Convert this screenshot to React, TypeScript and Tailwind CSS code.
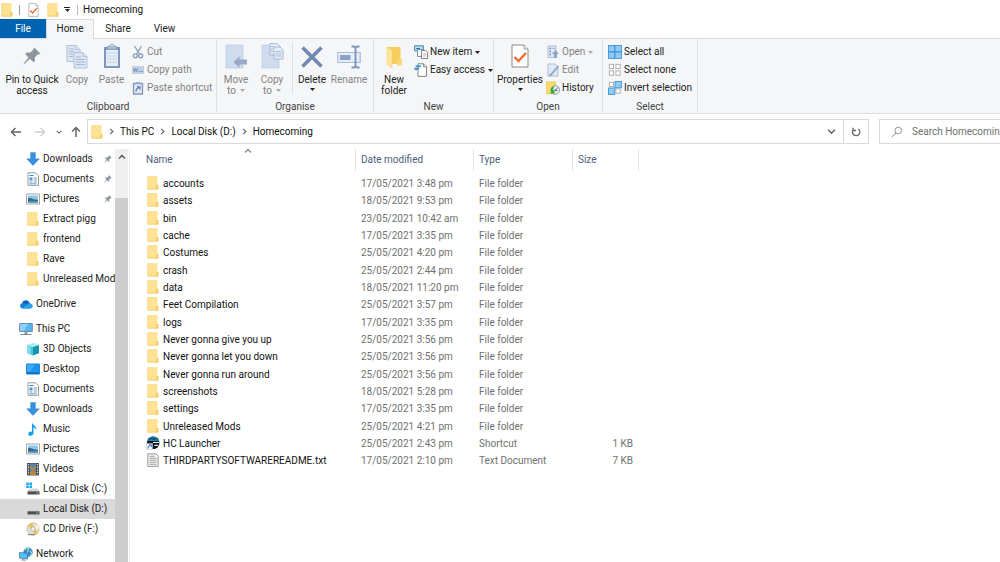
import type { ReactNode } from "react";

/* ---------- icons ---------- */

function Folder({ className = "w-[12px] h-[14px]" }: { className?: string }) {
  return (
    <svg viewBox="0 0 12 14" className={`shrink-0 ${className}`} aria-hidden="true">
      <path d="M.5.5H10.500v12.800H.5z" fill="#ffe394" />
      <path d="M.5.5H10.500v.8H.5zM.5.5h.7v12.800H.5z" fill="#f6d478" />
      <path d="M.5 12.700H10.500v.8H.5z" fill="#efc75c" />
      <path d="M9.300 9.300h1.900v3.900H9.300z" fill="#fbdb7c" stroke="#ecc355" strokeWidth=".6" />
    </svg>
  );
}

function PinIcon({ className, color }: { className: string; color: string }) {
  return (
    <svg viewBox="0 0 18 18" className={`shrink-0 ${className}`} aria-hidden="true">
      <path d="M11.5.8l5.8 5.8-1.5.9-.9-.2-3.2 3.3.3 3.2-1.5 1.5-3.6-3.5L1 17.3l-.5-.5 5-6.4-3.3-3.5 1.5-1.5 3.6.2 3.2-3-.2-.8z" fill={color} />
    </svg>
  );
}

const CopyIcon = () => (
  <svg viewBox="0 0 22 26" className="w-[22px] h-[26px]" aria-hidden="true">
    <g fill="#dbe5f3" stroke="#aabdd9" strokeWidth=".9">
      <path d="M1 2.500h9l4 4v12H1z" />
      <path d="M10 2.500v4h4" />
      <path d="M8 9.500h9l4 4v11.500H8z" />
      <path d="M17 9.500v4h4" />
    </g>
    <path d="M3 6h5M3 8.500h5M3 11h4M3 13.500h4M10 14h5M10 16.500h9M10 19h9M10 21.500h9" stroke="#9db3d3" strokeWidth=".9" />
  </svg>
);

const PasteIcon = () => (
  <svg viewBox="0 0 20 26" className="w-[20px] h-[26px]" aria-hidden="true">
    <path d="M2 4h16v21H2z" fill="#7f95bb" />
    <path d="M4 7h12v16H4z" fill="#e6edf8" />
    <path d="M5 10h10M5 13h10M5 16h10M5 19h10" stroke="#c3d1e7" strokeWidth=".9" />
    <path d="M5.500 3h2.500a2 2 0 014 0h2.500v3.500h-9z" fill="#a9bbd7" stroke="#7f95bb" strokeWidth=".6" />
    <circle cx="10" cy="2.800" r=".8" fill="#f5f6f7" />
  </svg>
);

const CutIcon = () => (
  <svg viewBox="0 0 12 14" className="w-[12px] h-[14px]" aria-hidden="true">
    <path d="M2.500 1l5 8M9.500 1l-5 8" stroke="#8fa3bf" strokeWidth="1.400" />
    <circle cx="3.300" cy="10.800" r="2" fill="none" stroke="#8095b8" strokeWidth="1.200" />
    <circle cx="8.700" cy="10.800" r="2" fill="none" stroke="#8095b8" strokeWidth="1.200" />
  </svg>
);

const CopyPathIcon = () => (
  <svg viewBox="0 0 12 12" className="w-[12px] h-[12px]" aria-hidden="true">
    <path d="M0 2h12v8H0z" fill="#c2d0e6" />
    <path d="M1.500 4.500l1 3 1-3 1 3 1-3" fill="none" stroke="#6d83aa" strokeWidth=".9" />
    <path d="M6.500 7.500h1M8.300 7.500h1M10 7.500h1" stroke="#6d83aa" />
  </svg>
);

const PasteShortcutIcon = () => (
  <svg viewBox="0 0 12 14" className="w-[12px] h-[14px]" aria-hidden="true">
    <path d="M1.500 2.500h9v10.500h-9z" fill="#dfe8f5" stroke="#8499bd" strokeWidth="1.300" />
    <path d="M4 1h4v2H4z" fill="#9db0cf" />
    <path d="M4 10.500c0-2.500 1-3.500 3-3.500M5 5.800h3v3" fill="none" stroke="#5f79a8" strokeWidth="1.200" />
  </svg>
);

const MoveIcon = () => (
  <svg viewBox="0 0 24 26" className="w-[24px] h-[26px]" aria-hidden="true">
    <path d="M2 2h17v23H2z" fill="#cfdcef" stroke="#b9cae4" strokeWidth=".7" />
    <path d="M9.500 19l6-5.800v3.400H23v4.800h-7.500v3.400z" fill="#98aac6" />
  </svg>
);

const CopyToIcon = () => (
  <svg viewBox="0 0 24 26" className="w-[24px] h-[26px]" aria-hidden="true">
    <path d="M2 2h17v23H2z" fill="#cfdcef" stroke="#b9cae4" strokeWidth=".7" />
    <path d="M10 .6h7l3 3V12H10z" fill="#e9eff8" stroke="#92a8ca" strokeWidth=".8" />
    <path d="M14 4h6l3 3v9h-9z" fill="#e9eff8" stroke="#92a8ca" strokeWidth=".8" />
    <path d="M11 3.500h3M11 6h2M11 8.500h2M15.500 8.500h6M15.500 10.800h6M15.500 13h6" stroke="#92a8ca" strokeWidth=".8" />
  </svg>
);

const DeleteIcon = () => (
  <svg viewBox="0 0 24 26" className="w-[24px] h-[26px]" aria-hidden="true">
    <path d="M2.500 4.500l19 19M21.500 4.500l-19 19" stroke="#7388b0" strokeWidth="3.600" />
  </svg>
);

const RenameIcon = () => (
  <svg viewBox="0 0 24 26" className="w-[24px] h-[26px]" aria-hidden="true">
    <path d="M.8 9.500h22.400v10H.8z" fill="#e6edf7" stroke="#a9bcd9" strokeWidth="1.200" />
    <path d="M3 12h10.500v5H3z" fill="#8ca1c6" />
    <path d="M14.500 3.500h2.500l1.500 1 1.500-1h2.500M14.500 24.500h2.500l1.500-1 1.500 1h2.500M18.500 4.500v19" fill="none" stroke="#7c93bb" strokeWidth="1.900" />
  </svg>
);

const NewFolderIcon = () => (
  <svg viewBox="0 0 18 26" className="w-[18px] h-[26px]" aria-hidden="true">
    <path d="M2 4h13.500v17H2z" fill="#f7cd5f" />
    <path d="M2 4l5 3.500V25l-5-3.500z" fill="#ffe59a" stroke="#f3cf6b" strokeWidth=".5" />
    <path d="M12 17l1-1h4v6.500H12z" fill="#fbd876" />
  </svg>
);

const NewItemIcon = () => (
  <svg viewBox="0 0 14 14" className="w-[14px] h-[14px]" aria-hidden="true">
    <path d="M.6.8h8.800v5H.6z" fill="#b9ddf2" stroke="#4c86ad" />
    <path d="M2 3.500h4" stroke="#3577a3" />
    <path d="M3.500 4.500h5v7h-5z" fill="#f2f7fb" stroke="#6c8ba5" strokeWidth=".9" />
    <path d="M7.500 5.500h4l2 2v6h-6z" fill="#fff" stroke="#777" strokeWidth=".9" />
    <path d="M9 9h3M9 11h3" stroke="#b892a2" strokeWidth=".8" />
  </svg>
);

const EasyAccessIcon = () => (
  <svg viewBox="0 0 14 14" className="w-[14px] h-[14px]" aria-hidden="true">
    <path d="M4 .8h5.500l3 3v9.600H4z" fill="#fff" stroke="#777" strokeWidth=".9" />
    <path d="M9.500.8v3h3" fill="none" stroke="#777" strokeWidth=".8" />
    <path d="M2 2.500h5.500l-1 1.800H1.200zM.5 5h5l-1.200 1.800H2.800L1.500 8 2 6.800H0z" fill="#3b8fce" />
  </svg>
);

const CheckDoc = ({ className }: { className: string }) => (
  <svg viewBox="0 0 18 24" className={`shrink-0 ${className}`} aria-hidden="true">
    <path d="M1 1h12l4 4v18H1z" fill="#fff" stroke="#8b8b8b" strokeWidth="1" />
    <path d="M13 1v4h4" fill="#eee" stroke="#8b8b8b" strokeWidth=".8" />
    <path d="M3.500 13l4 4L15 9" fill="none" stroke="#ee6b2d" strokeWidth="2.300" />
  </svg>
);

const OpenIcon = () => (
  <svg viewBox="0 0 12 14" className="w-[12px] h-[14px]" aria-hidden="true">
    <path d="M1 1h8v11.500H1z" fill="#dce6f4" stroke="#a5b8d5" strokeWidth=".9" />
    <path d="M2.500 3.500h1.500M2.500 6.500h1.500M2.500 9.500h1.500" stroke="#7188b0" strokeWidth="1.400" />
    <path d="M5.500 3.500h2.500" stroke="#a5b8d5" />
    <path d="M8.500 5l3.500 4h-2v4H7V9H5z" fill="#90a5c6" />
  </svg>
);

const EditIcon = () => (
  <svg viewBox="0 0 12 14" className="w-[12px] h-[14px]" aria-hidden="true">
    <path d="M1 1h7l3 3v9H1z" fill="#e1eaf6" stroke="#a5b8d5" strokeWidth=".9" />
    <path d="M11.500 3L5 10.500l-2.500 2.500" stroke="#8fa5c8" strokeWidth="1.900" fill="none" />
  </svg>
);

const HistoryIcon = () => (
  <svg viewBox="0 0 14 14" className="w-[14px] h-[14px]" aria-hidden="true">
    <path d="M.5.800h9v12H.5z" fill="#fbdc6b" stroke="#e7bc42" strokeWidth=".6" />
    <circle cx="9.300" cy="9" r="4.300" fill="#e9eeee" stroke="#7d8b8b" strokeWidth=".8" />
    <path d="M9 9.500l3-3M9 9.500h2.500" stroke="#456" strokeWidth=".9" fill="none" />
    <path d="M7.500 5.500c-3 .8-3.200 3.500-2.200 5.500L3.500 12.500h5V8L7 9.500c-.5-1 0-2 1.200-2.500z" fill="#37a53c" />
  </svg>
);

function SelectGrid({ filled }: { filled: boolean[] }) {
  const spots = [[0.7, 0.7], [7.3, 0.7], [0.7, 7.3], [7.3, 7.3]];
  return (
    <svg viewBox="0 0 14 14" className="w-[14px] h-[14px]" aria-hidden="true">
      {spots.map(([x, y], i) =>
        filled[i] ? (
          <rect key={i} x={x - 0.3} y={y - 0.3} width="6.400" height="6.400" fill="#8fcbf6" stroke="#3e92d2" strokeWidth=".9" />
        ) : (
          <rect key={i} x={x + 0.6} y={y + 0.6} width="4.300" height="4.300" fill="#fff" stroke="#a0a0a0" strokeWidth=".8" />
        )
      )}
    </svg>
  );
}

const DownloadsIcon = () => (
  <svg viewBox="0 0 14 14" className="w-[14px] h-[14px]" aria-hidden="true">
    <path d="M4.600.5h4.800v6.300h4L7 13.500.6 6.800h4z" fill="#3591e0" stroke="#2b7cc9" strokeWidth=".4" />
  </svg>
);

const DocumentsIcon = () => (
  <svg viewBox="0 0 14 14" className="w-[14px] h-[14px]" aria-hidden="true">
    <path d="M2 .8h7.500l3 3v9.500H2z" fill="#fff" stroke="#8a8f94" strokeWidth=".9" />
    <path d="M3.500 3.500h4" stroke="#3d85bd" />
    <path d="M3.500 5.500h3v3h-3z" fill="#4b95ce" />
    <path d="M7.800 6h3M7.800 8h3M3.500 10h3M7.800 10h3M3.500 11.800h7" stroke="#5095c5" strokeWidth=".9" />
  </svg>
);

const PicturesIcon = () => (
  <svg viewBox="0 0 14 14" className="w-[14px] h-[14px]" aria-hidden="true">
    <path d="M.5 2h13v10H.5z" fill="#fff" stroke="#9a9a9a" strokeWidth=".9" />
    <path d="M2 3.500h10v7H2z" fill="#8cc5ea" />
    <path d="M2 6.500c3-1.500 5 1.500 10 1.500v2.500H2z" fill="#396b83" />
    <path d="M2 9.500c4-1 7 0 10-.5v1.500H2z" fill="#4f94c5" />
  </svg>
);

const OneDriveIcon = () => (
  <svg viewBox="0 0 14 14" className="w-[14px] h-[14px]" aria-hidden="true">
    <path d="M3 6.300a4 4 0 017.300-1.100L13 9.500 3 11z" fill="#0b62b8" />
    <path d="M3.300 11.500A2.800 2.800 0 013.300 6c1.500-.3 3 .3 4 1.500l3.700 4z" fill="#1681d8" />
    <path d="M3 11.500l5.500-4.200C9.800 5 13.800 6.500 13.800 9.300c0 1.300-1 2.200-2.300 2.200z" fill="#2aa3ec" />
  </svg>
);

const PcIcon = () => (
  <svg viewBox="0 0 14 14" className="w-[14px] h-[14px]" aria-hidden="true">
    <path d="M.7 1.500h12.600v8H.7z" fill="#53b6f3" stroke="#6a8196" strokeWidth=".9" />
    <path d="M1.200 2h8L5 9H1.200z" fill="#8bd0fa" />
    <path d="M5.500 9.800h3V12h-3z" fill="#8c9aa6" />
    <path d="M1.500 12h11v1h-11z" fill="#7d8a96" />
  </svg>
);

const CubeIcon = () => (
  <svg viewBox="0 0 14 14" className="w-[14px] h-[14px]" aria-hidden="true">
    <path d="M1 3L7.500.7 13 3 7 5z" fill="#a6edf4" />
    <path d="M1 3l6 2v8.500l-6-2.300z" fill="#4bc8d8" />
    <path d="M13 3L7 5v8.500l6-2.300z" fill="#1694ad" />
    <path d="M1 3l3.500 1.200v8.300L1 11.200z" fill="#7fdee8" />
  </svg>
);

const DesktopIcon = () => (
  <svg viewBox="0 0 14 14" className="w-[14px] h-[14px]" aria-hidden="true">
    <path d="M.6 2h12.800v10H.6z" fill="#1b95ee" stroke="#0c76c6" strokeWidth=".9" />
    <path d="M1 2.500h8L4 10H1z" fill="#3aabf8" />
    <path d="M1 10.500h12v1H1z" fill="#075ea3" />
  </svg>
);

const MusicIcon = () => (
  <svg viewBox="0 0 14 14" className="w-[14px] h-[14px]" aria-hidden="true">
    <path d="M6 .3c.4 3 5.300 3.800 4.200 8-.5-2-1.700-2.800-2.700-3.100v5.800c0 1.800-1.600 2.700-3 2.700-1.300 0-2.200-.7-2.200-1.800 0-1.700 1.900-2.600 3.700-2.200z" fill="#169be8" />
  </svg>
);

const VideosIcon = () => (
  <svg viewBox="0 0 14 14" className="w-[14px] h-[14px]" aria-hidden="true">
    <path d="M1 1h12v12.500H1z" fill="#4b4f55" />
    <path d="M4 1.500h6v11.500H4z" fill="#4c87bb" />
    <path d="M4 3l3 3 3-3v3L7 9 4 6zM4 10l3-1.500 3 2V13H4z" fill="#b98539" />
    <path d="M2.500 2v11M11.500 2v11" stroke="#e1e1e1" strokeWidth="1.200" strokeDasharray="1.300 1.300" />
  </svg>
);

const DiskIcon = ({ system = false }: { system?: boolean }) => (
  <svg viewBox="0 0 14 14" className="w-[14px] h-[14px]" aria-hidden="true">
    <path d="M3.500 6.500h8l2 2.800h-12z" fill="#d3d5d7" />
    <path d="M1.500 9.300h12V12.500h-12z" fill="#4c5155" />
    <path d="M10.500 11h1.800" stroke="#67e36a" />
    {system && <path d="M.3.6h2.500v2.300H.3zM3.500.6H6v2.300H3.500zM.3 3.600h2.500v2.300H.3zM3.500 3.600H6v2.300H3.500z" fill="#16a6ee" />}
  </svg>
);

const CdIcon = () => (
  <svg viewBox="0 0 14 14" className="w-[14px] h-[14px]" aria-hidden="true">
    <circle cx="7" cy="7" r="6.200" fill="#e2e0d7" stroke="#b0aca1" strokeWidth=".6" />
    <path d="M7 7L1.500 4A6.200 6.200 0 017 .9zM7 7l5.500 3a6.200 6.200 0 01-4.500 3z" fill="#e8c255" />
    <path d="M7 7l4.500-4.300a6 6 0 011.500 4z" fill="#fbf5d6" />
    <circle cx="7" cy="7" r="2.200" fill="#f9f9f7" stroke="#aaa28a" strokeWidth=".8" />
    <path d="M2 12h7v1.200H2z" fill="#8c8c88" />
  </svg>
);

const NetworkIcon = () => (
  <svg viewBox="0 0 14 14" className="w-[14px] h-[14px]" aria-hidden="true">
    <circle cx="9" cy="5.300" r="4.700" fill="#3a88bd" />
    <path d="M5.500 3c2-2 3-1 4-1.500 1 2-1 2-1 4M11 4l2 2-2 3" stroke="#9ed3ea" strokeWidth="1.200" fill="none" />
    <path d="M.5 5.500l8 1v5.500l-8-1z" fill="#5bbdf5" stroke="#2e7db4" strokeWidth=".8" />
    <path d="M3 12l4 1v.6H2.500z" fill="#78858d" />
  </svg>
);

const LauncherIcon = () => (
  <svg viewBox="0 0 14 14" className="w-[14px] h-[14px]" aria-hidden="true">
    <circle cx="7.200" cy="6.800" r="6.300" fill="#10171d" />
    <path d="M1.200 5a6.300 6.300 0 0112 0z" fill="#1f84b5" />
    <path d="M4 4V2.500M6 4V1.500M8 4V2M10 4V2.500" stroke="#0e2f44" strokeWidth="1" />
    <path d="M7 6.500h6.300M8.500 9.300h3.500" stroke="#dfe7ec" strokeWidth="1.200" />
    <path d="M.5 7.500h6v6h-6z" fill="#f4f7fb" stroke="#aebac8" strokeWidth=".5" />
    <path d="M2 12.500c0-2 .8-2.800 2.500-2.800M3 8.800h2.300v2.300" fill="none" stroke="#2769b5" strokeWidth="1" />
  </svg>
);

const TextFileIcon = () => (
  <svg viewBox="0 0 14 14" className="w-[14px] h-[14px]" aria-hidden="true">
    <path d="M1.800.8h8l2.400 2.400v10.200H1.800z" fill="#f4f4f4" stroke="#8e8e8e" strokeWidth=".9" />
    <path d="M3.500 3.300h5M3.500 5.300h7M3.500 7.300h7M3.500 9.300h7M3.500 11.300h7" stroke="#9a9a9a" strokeWidth=".9" />
  </svg>
);

const Caret = ({ className }: { className: string }) => (
  <svg viewBox="0 0 5 3" className={`w-[5px] h-[3px] shrink-0 ${className}`} aria-hidden="true">
    <path d="M0 0h5L2.500 3z" fill="currentColor" />
  </svg>
);

function Chevron({ d, className }: { d: string; className: string }) {
  return (
    <svg viewBox="0 0 8 8" className={`shrink-0 ${className}`} aria-hidden="true">
      <path d={d} fill="none" stroke="currentColor" strokeWidth="1.400" />
    </svg>
  );
}
const DOWN = "M1 2.500l3 3 3-3";
const UP = "M1 5.500l3-3 3 3";
const RIGHT = "M2.500 1l3 3-3 3";

function Arrow({ className }: { className: string }) {
  return (
    <svg viewBox="0 0 12 12" className={`w-[12px] h-[12px] ${className}`} aria-hidden="true">
      <path d="M11 6H1.500M5.500 2L1.500 6l4 4" fill="none" stroke="currentColor" strokeWidth="1.500" />
    </svg>
  );
}

/* ---------- ribbon ---------- */

function Group({ label, className, children }: { label: string; className: string; children: ReactNode }) {
  return (
    <section className={`flex shrink-0 flex-col border-r border-[#e2e3e4] ${className}`} aria-label={label}>
      <div className="flex h-[61px] items-start pt-[3px]">{children}</div>
      <div className="text-center leading-[13px] text-[#444]">{label}</div>
    </section>
  );
}

function BigButton(props: { icon: ReactNode; lines: string[]; className: string; caret?: boolean; disabled?: boolean }) {
  const { icon, lines, className, caret, disabled } = props;
  const last = lines.length - 1;
  return (
    <button
      type="button"
      disabled={disabled}
      className={`flex shrink-0 flex-col items-center whitespace-nowrap leading-[11px] ${disabled ? "text-[#838383]" : "text-[#222]"} ${className}`}
    >
      <span className="mb-1 flex h-[28px] items-center justify-center">{icon}</span>
      {lines.map((l, i) => (
        <span key={l} className="flex items-center gap-1">
          {l}
          {caret && last > 0 && i === last && <Caret className="text-[#aaa]" />}
        </span>
      ))}
      {caret && last === 0 && <Caret className="mt-[3px]" />}
    </button>
  );
}

function SmallButton(props: { icon: ReactNode; label: string; caret?: boolean; disabled?: boolean }) {
  const { icon, label, caret, disabled } = props;
  return (
    <button
      type="button"
      disabled={disabled}
      className={`flex h-[18px] items-center whitespace-nowrap ${disabled ? "text-[#838383]" : "text-[#222]"}`}
    >
      <span className="mr-0.5 flex w-[14px] shrink-0 justify-center">{icon}</span>
      {label}
      {caret && <Caret className={disabled ? "ml-[3px] text-[#aaa]" : "ml-[3px]"} />}
    </button>
  );
}

function Ribbon() {
  return (
    <div className="flex h-[76px] shrink-0 border-y border-[#dadbdc] bg-[#f5f6f7]">
      <Group label="Clipboard" className="w-[217px]">
        <BigButton className="ml-0.5 w-[60px]" lines={["Pin to Quick", "access"]} icon={<PinIcon className="w-[18px] h-[18px]" color="#8c959e" />} />
        <BigButton className="w-[30px]" lines={["Copy"]} disabled icon={<CopyIcon />} />
        <BigButton className="w-[39px]" lines={["Paste"]} disabled icon={<PasteIcon />} />
        <div className="pt-px">
          <SmallButton icon={<CutIcon />} label="Cut" disabled />
          <SmallButton icon={<CopyPathIcon />} label="Copy path" disabled />
          <SmallButton icon={<PasteShortcutIcon />} label="Paste shortcut" disabled />
        </div>
      </Group>
      <Group label="Organise" className="w-[157px]">
        <BigButton className="w-[38px]" lines={["Move", "to"]} caret disabled icon={<MoveIcon />} />
        <BigButton className="w-[34px]" lines={["Copy", "to"]} caret disabled icon={<CopyToIcon />} />
        <div className="ml-[3px] h-[52px] w-px bg-[#e0e1e2]" />
        <BigButton className="w-[38px]" lines={["Delete"]} caret icon={<DeleteIcon />} />
        <BigButton className="w-[36px]" lines={["Rename"]} disabled icon={<RenameIcon />} />
      </Group>
      <Group label="New" className="w-[120px]">
        <BigButton className="w-[40px]" lines={["New", "folder"]} icon={<NewFolderIcon />} />
        <div className="pt-px">
          <SmallButton icon={<NewItemIcon />} label="New item" caret />
          <SmallButton icon={<EasyAccessIcon />} label="Easy access" caret />
        </div>
      </Group>
      <Group label="Open" className="w-[109px]">
        <BigButton className="w-[52px]" lines={["Properties"]} caret icon={<CheckDoc className="w-[18px] h-[24px]" />} />
        <div className="pt-px">
          <SmallButton icon={<OpenIcon />} label="Open" caret disabled />
          <SmallButton icon={<EditIcon />} label="Edit" disabled />
          <SmallButton icon={<HistoryIcon />} label="History" />
        </div>
      </Group>
      <Group label="Select" className="w-[95px]">
        <div className="ml-[5px] pt-px">
          <SmallButton icon={<SelectGrid filled={[true, true, true, true]} />} label="Select all" />
          <SmallButton icon={<SelectGrid filled={[false, false, false, false]} />} label="Select none" />
          <SmallButton icon={<SelectGrid filled={[false, true, true, false]} />} label="Invert selection" />
        </div>
      </Group>
    </div>
  );
}

/* ---------- navigation pane ---------- */

type NavEntry = { label: string; icon: ReactNode; root?: boolean; pinned?: boolean; selected?: boolean };

const quickAccess: NavEntry[] = [
  { label: "Downloads", icon: <DownloadsIcon />, pinned: true },
  { label: "Documents", icon: <DocumentsIcon />, pinned: true },
  { label: "Pictures", icon: <PicturesIcon />, pinned: true },
  { label: "Extract pigg", icon: <Folder /> },
  { label: "frontend", icon: <Folder /> },
  { label: "Rave", icon: <Folder /> },
  { label: "Unreleased Mods", icon: <Folder /> },
];
const thisPc: NavEntry[] = [
  { label: "This PC", icon: <PcIcon />, root: true },
  { label: "3D Objects", icon: <CubeIcon /> },
  { label: "Desktop", icon: <DesktopIcon /> },
  { label: "Documents", icon: <DocumentsIcon /> },
  { label: "Downloads", icon: <DownloadsIcon /> },
  { label: "Music", icon: <MusicIcon /> },
  { label: "Pictures", icon: <PicturesIcon /> },
  { label: "Videos", icon: <VideosIcon /> },
  { label: "Local Disk (C:)", icon: <DiskIcon system /> },
  { label: "Local Disk (D:)", icon: <DiskIcon />, selected: true },
  { label: "CD Drive (F:)", icon: <CdIcon /> },
];

function NavGroup({ items }: { items: NavEntry[] }) {
  return (
    <ul>
      {items.map((it) => (
        <li key={it.label}>
          <a
            href="#"
            className={`flex h-5 items-center overflow-hidden whitespace-nowrap ${it.root ? "pl-[19px]" : "pl-[26px]"} ${it.selected ? "bg-[#d9d9d9]" : ""}`}
          >
            <span className="mr-[3px] flex w-[14px] shrink-0 justify-center">{it.icon}</span>
            <span className="min-w-0 flex-1 overflow-hidden">{it.label}</span>
            {it.pinned && <PinIcon className="mr-[3px] w-[8px] h-[8px]" color="#8a97a3" />}
          </a>
        </li>
      ))}
    </ul>
  );
}

function NavPane() {
  return (
    <div className="flex w-[130px] shrink-0 border-r border-[#ececec]">
      <nav className="flex min-w-0 flex-1 flex-col gap-[5px] overflow-hidden" aria-label="Folders">
        <NavGroup items={quickAccess} />
        <NavGroup items={[{ label: "OneDrive", icon: <OneDriveIcon />, root: true }]} />
        <NavGroup items={thisPc} />
        <NavGroup items={[{ label: "Network", icon: <NetworkIcon />, root: true }]} />
      </nav>
      <div className="mr-px flex w-[13px] shrink-0 flex-col bg-[#f0f0f0]">
        <button type="button" aria-label="Scroll up" className="flex h-[49px] justify-center pt-1 text-[#505050]">
          <Chevron d={UP} className="w-[8px] h-[8px]" />
        </button>
        <div className="flex-1 bg-[#cdcdcd]" />
      </div>
    </div>
  );
}

/* ---------- file list ---------- */

type Entry = [name: string, date: string, type?: string, size?: string];
const entries: Entry[] = [
  ["accounts", "17/05/2021 3:48 pm"],
  ["assets", "18/05/2021 9:53 pm"],
  ["bin", "23/05/2021 10:42 am"],
  ["cache", "17/05/2021 3:35 pm"],
  ["Costumes", "25/05/2021 4:20 pm"],
  ["crash", "25/05/2021 2:44 pm"],
  ["data", "18/05/2021 11:20 pm"],
  ["Feet Compilation", "25/05/2021 3:57 pm"],
  ["logs", "17/05/2021 3:35 pm"],
  ["Never gonna give you up", "25/05/2021 3:56 pm"],
  ["Never gonna let you down", "25/05/2021 3:56 pm"],
  ["Never gonna run around", "25/05/2021 3:56 pm"],
  ["screenshots", "18/05/2021 5:28 pm"],
  ["settings", "17/05/2021 3:35 pm"],
  ["Unreleased Mods", "25/05/2021 4:21 pm"],
  ["HC Launcher", "25/05/2021 2:43 pm", "Shortcut", "1 KB"],
  ["THIRDPARTYSOFTWAREREADME.txt", "17/05/2021 2:10 pm", "Text Document", "7 KB"],
];

function FileIcon({ type }: { type: string }) {
  if (type === "Shortcut") return <LauncherIcon />;
  if (type === "Text Document") return <TextFileIcon />;
  return <Folder />;
}

function FileList() {
  return (
    <main className="min-w-0 flex-1">
      <table className="table-fixed border-collapse whitespace-nowrap text-[#707070]">
        <thead>
          <tr className="text-left text-[#4c607a]">
            {[
              ["Name", "w-[226px] pl-4"],
              ["Date modified", "w-[118px] pl-[5px]"],
              ["Type", "w-[99px] pl-[5px]"],
              ["Size", "w-[66px] pl-[5px]"],
            ].map(([h, cls]) => (
              <th key={h} scope="col" className="p-0 pb-1 font-normal">
                <div className={`relative flex h-[22px] items-center border-r border-[#e2e2e2] ${cls}`}>
                  {h}
                  {h === "Name" && <Chevron d={UP} className="absolute left-[114px] top-[-2px] w-[8px] h-[8px] text-[#8a8a8a]" />}
                </div>
              </th>
            ))}
          </tr>
        </thead>
        <tbody>
          {entries.map(([name, date, type = "File folder", size = ""]) => (
            <tr key={name} className="h-[17px] leading-[17px] nth-[3n]:h-[18px]">
              <td className="p-0 pl-4">
                <span className="flex items-center gap-[3px] text-[#111]">
                  <span className="flex w-[14px] justify-center pb-px">
                    <FileIcon type={type} />
                  </span>
                  {name}
                </span>
              </td>
              <td className="p-0 pl-[5px]">{date}</td>
              <td className="p-0 pl-[5px]">{type}</td>
              <td className="p-0 pr-1.5 text-right">{size}</td>
            </tr>
          ))}
        </tbody>
      </table>
    </main>
  );
}

/* ---------- window ---------- */

function AddressRow() {
  return (
    <div className="flex h-[35px] shrink-0 items-start pt-[5px] text-[#333]">
      <div className="flex h-[25px] w-[87px] shrink-0 items-center pl-2.5 text-[#666]">
        <button type="button" aria-label="Back"><Arrow className="" /></button>
        <button type="button" aria-label="Forward" className="ml-3 text-[#cfcfcf]" disabled><Arrow className="rotate-180" /></button>
        <button type="button" aria-label="Recent locations" className="ml-2.5"><Chevron d={DOWN} className="w-[6px] h-[6px]" /></button>
        <button type="button" aria-label="Up" className="ml-2"><Arrow className="rotate-90" /></button>
      </div>
      <div className="flex h-[25px] min-w-0 flex-1 items-center border border-[#d9d9d9] pl-[3px]">
        <Folder />
        {["This PC", "Local Disk (D:)", "Homecoming"].map((p) => (
          <span key={p} className="flex items-center whitespace-nowrap">
            <Chevron d={RIGHT} className="mx-[5px] w-[7px] h-[7px] text-[#666]" />
            <a href="#" className="text-[#111]">{p}</a>
          </span>
        ))}
        <button type="button" aria-label="Previous locations" className="ml-auto mr-[7px] text-[#666]">
          <Chevron d={DOWN} className="w-[9px] h-[9px]" />
        </button>
        <button type="button" aria-label="Refresh" className="flex h-full w-[25px] items-center justify-center border-l border-[#d9d9d9] text-[#666]">
          <svg viewBox="0 0 10 10" className="w-[10px] h-[10px]" aria-hidden="true">
            <path d="M7.300 2a3.700 3.700 0 11-4.800.4M2 .8v2.700h3" fill="none" stroke="currentColor" strokeWidth="1.300" />
          </svg>
        </button>
      </div>
      <label className="ml-2.5 flex h-[25px] w-[121px] shrink-0 items-center border border-r-0 border-[#d9d9d9] pl-[11px]">
        <svg viewBox="0 0 12 12" className="w-[12px] h-[12px] shrink-0" aria-hidden="true">
          <circle cx="7.300" cy="4.500" r="3.300" fill="none" stroke="#8a8a8a" strokeWidth=".9" />
          <path d="M5 7L.8 11" stroke="#8a8a8a" strokeWidth="1" />
        </svg>
        <input type="text" aria-label="Search Homecoming" placeholder="Search Homecoming" className="ml-[9px] min-w-0 flex-1 bg-transparent outline-none placeholder:text-[#707070]" />
      </label>
    </div>
  );
}

export default function App() {
  return (
    <div className="flex h-screen flex-col overflow-hidden bg-white text-[10px] leading-[14px] text-[#222] font-['Roboto',sans-serif]">
      <header className="flex h-[19px] shrink-0 items-center">
        <Folder className="ml-px w-[12px] h-[14px]" />
        <span className="ml-1.5 h-[10px] w-px bg-[#999]" />
        <CheckDoc className="ml-2 w-[11px] h-[14px]" />
        <Folder className="ml-2 w-[12px] h-[14px]" />
        <button type="button" aria-label="Customise toolbar" className="ml-[5px] flex flex-col items-center">
          <span className="mb-px h-px w-[6px] bg-[#222]" />
          <Caret className="" />
        </button>
        <span className="ml-[7px] h-[10px] w-px bg-[#bbb]" />
        <h1 className="ml-[5px] text-[#111]">Homecoming</h1>
      </header>
      <div role="tablist" className="flex h-[19px] shrink-0">
        <button type="button" role="tab" className="w-[46px] bg-[#0063b1] text-white">File</button>
        <button type="button" role="tab" aria-selected="true" className="relative z-10 -mb-px w-[48px] border border-b-0 border-[#dadbdc] bg-[#f5f6f7] pb-0.5">Home</button>
        <button type="button" role="tab" className="w-[48px]">Share</button>
        <button type="button" role="tab" className="w-[45px]">View</button>
      </div>
      <Ribbon />
      <AddressRow />
      <div className="flex min-h-0 flex-1">
        <NavPane />
        <FileList />
      </div>
    </div>
  );
}
